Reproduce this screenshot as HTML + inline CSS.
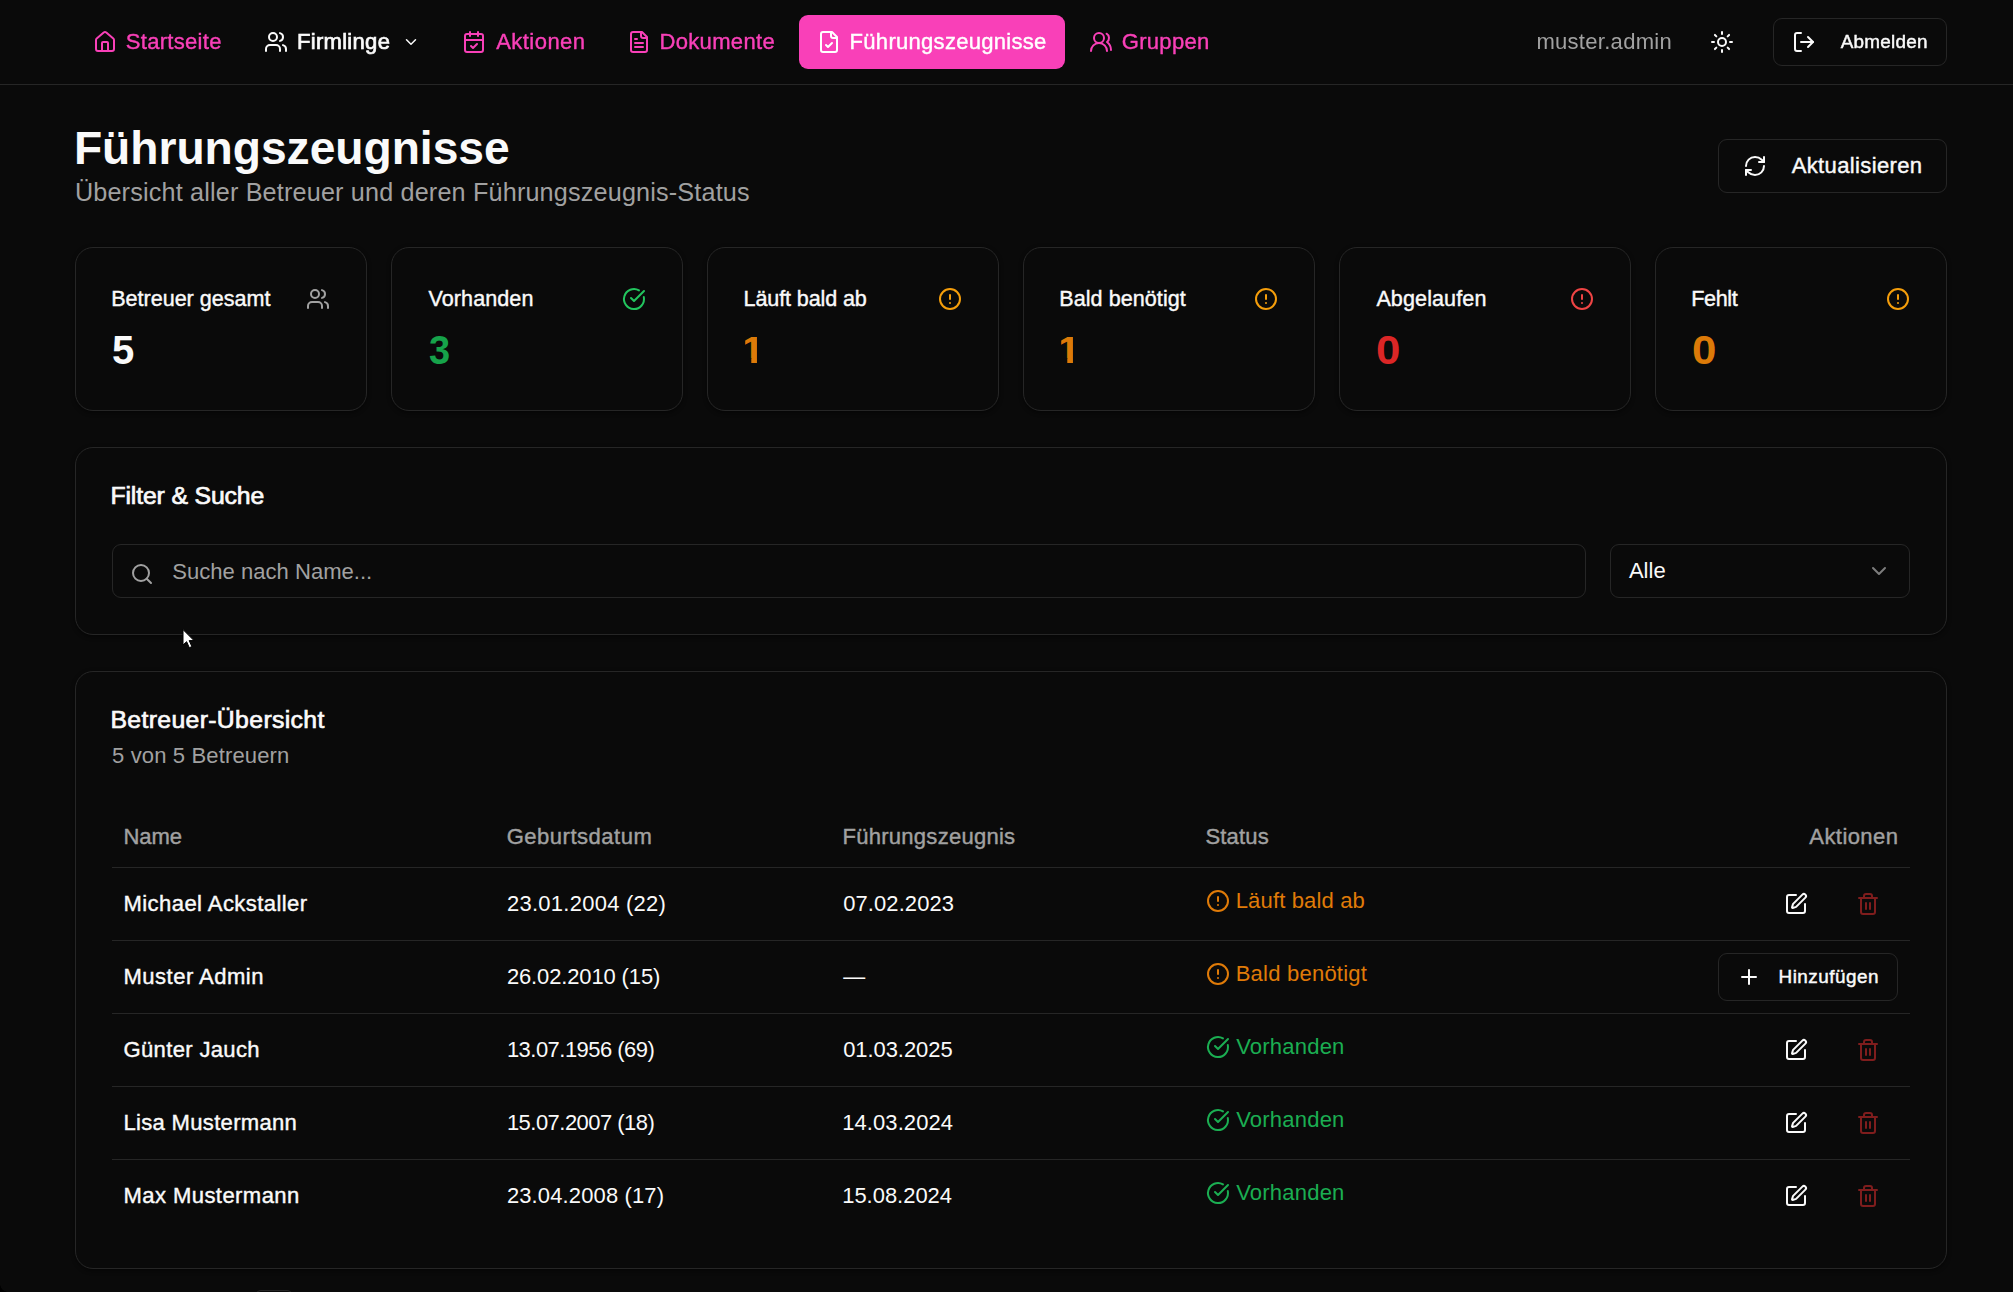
<!DOCTYPE html>
<html lang="de"><head><meta charset="utf-8"><title>Führungszeugnisse</title><style>html,body{margin:0;padding:0;background:#0a0a0a;}
body{width:2013px;height:1292px;position:relative;overflow:hidden;font-family:"Liberation Sans",sans-serif;color:#fafafa;}
.t{position:absolute;white-space:nowrap;display:block;}
.b{position:absolute;box-sizing:border-box;}
.i{position:absolute;display:block;overflow:visible;}
header{position:absolute;left:0;top:0;width:2013px;height:85px;will-change:transform;}</style></head><body>
<header>
<div class="b" style="left:0;top:84px;width:2013px;height:1px;background:#262626"></div>
<svg class="i" style="left:93px;top:30px" width="24" height="24" viewBox="0 0 24 24" fill="none" stroke="#f940b8" stroke-width="2" stroke-linecap="round" stroke-linejoin="round"><path d="M15 21v-8a1 1 0 0 0-1-1h-4a1 1 0 0 0-1 1v8"/><path d="M3 10a2 2 0 0 1 .709-1.528l7-5.999a2 2 0 0 1 2.582 0l7 5.999A2 2 0 0 1 21 10v9a2 2 0 0 1-2 2H5a2 2 0 0 1-2-2z"/></svg>
<span class="t" style="left:125.80px;top:25.00px;font-size:22.05px;line-height:33px;color:#f940b8;letter-spacing:0.281px;-webkit-text-stroke:0.4px #f940b8;">Startseite</span>
<svg class="i" style="left:264px;top:30px" width="24" height="24" viewBox="0 0 24 24" fill="none" stroke="#fafafa" stroke-width="2" stroke-linecap="round" stroke-linejoin="round"><path d="M16 21v-2a4 4 0 0 0-4-4H6a4 4 0 0 0-4 4v2"/><circle cx="9" cy="7" r="4"/><path d="M22 21v-2a4 4 0 0 0-3-3.87"/><path d="M16 3.13a4 4 0 0 1 0 7.75"/></svg>
<span class="t" style="left:296.95px;top:25.00px;font-size:22.05px;line-height:33px;color:#fafafa;letter-spacing:0.289px;-webkit-text-stroke:0.7px #fafafa;">Firmlinge</span>
<svg class="i" style="left:402px;top:33px" width="18" height="18" viewBox="0 0 24 24" fill="none" stroke="#fafafa" stroke-width="2" stroke-linecap="round" stroke-linejoin="round"><path d="m6 9 6 6 6-6"/></svg>
<svg class="i" style="left:462px;top:30px" width="24" height="24" viewBox="0 0 24 24" fill="none" stroke="#f940b8" stroke-width="2" stroke-linecap="round" stroke-linejoin="round"><path d="M8 2v4"/><path d="M16 2v4"/><rect width="18" height="18" x="3" y="4" rx="2"/><path d="M3 10h18"/><path d="m9 16 2 2 4-4"/></svg>
<span class="t" style="left:496.20px;top:25.00px;font-size:22.05px;line-height:33px;color:#f940b8;letter-spacing:0.438px;-webkit-text-stroke:0.4px #f940b8;">Aktionen</span>
<svg class="i" style="left:627px;top:30px" width="24" height="24" viewBox="0 0 24 24" fill="none" stroke="#f940b8" stroke-width="2" stroke-linecap="round" stroke-linejoin="round"><path d="M15 2H6a2 2 0 0 0-2 2v16a2 2 0 0 0 2 2h12a2 2 0 0 0 2-2V7Z"/><path d="M14 2v4a2 2 0 0 0 2 2h4"/><path d="M10 9H8"/><path d="M16 13H8"/><path d="M16 17H8"/></svg>
<span class="t" style="left:659.50px;top:25.00px;font-size:22.05px;line-height:33px;color:#f940b8;letter-spacing:0.302px;-webkit-text-stroke:0.4px #f940b8;">Dokumente</span>
<div class="b" style="left:799px;top:15px;width:266px;height:54px;border-radius:9px;background:#f940b8;"></div>
<svg class="i" style="left:817px;top:30px" width="24" height="24" viewBox="0 0 24 24" fill="none" stroke="#ffffff" stroke-width="2" stroke-linecap="round" stroke-linejoin="round"><path d="M15 2H6a2 2 0 0 0-2 2v16a2 2 0 0 0 2 2h12a2 2 0 0 0 2-2V7Z"/><path d="M14 2v4a2 2 0 0 0 2 2h4"/><path d="m9 15 2 2 4-4"/></svg>
<span class="t" style="left:849.60px;top:25.00px;font-size:22.05px;line-height:33px;color:#ffffff;letter-spacing:0.272px;-webkit-text-stroke:0.4px #ffffff;">Führungszeugnisse</span>
<svg class="i" style="left:1089px;top:30px" width="24" height="24" viewBox="0 0 24 24" fill="none" stroke="#f940b8" stroke-width="2" stroke-linecap="round" stroke-linejoin="round"><path d="M18 21a8 8 0 0 0-16 0"/><circle cx="10" cy="8" r="5"/><path d="M22 20c0-3.37-2-6.5-4-8a5 5 0 0 0-.45-8.3"/></svg>
<span class="t" style="left:1121.70px;top:25.00px;font-size:22.05px;line-height:33px;color:#f940b8;letter-spacing:0.294px;-webkit-text-stroke:0.4px #f940b8;">Gruppen</span>
<span class="t" style="left:1536.40px;top:25.00px;font-size:22.05px;line-height:33px;color:#a1a1a1;letter-spacing:0.275px;">muster.admin</span>
<svg class="i" style="left:1710px;top:30px" width="24" height="24" viewBox="0 0 24 24" fill="none" stroke="#fafafa" stroke-width="2" stroke-linecap="round" stroke-linejoin="round"><circle cx="12" cy="12" r="4"/><path d="M12 2v2"/><path d="M12 20v2"/><path d="m4.93 4.93 1.41 1.41"/><path d="m17.66 17.66 1.41 1.41"/><path d="M2 12h2"/><path d="M20 12h2"/><path d="m6.34 17.66-1.41 1.41"/><path d="m19.07 4.93-1.41 1.41"/></svg>
<div class="b" style="left:1773px;top:18px;width:174px;height:48px;border-radius:9px;border:1px solid #262626;"></div>
<svg class="i" style="left:1792px;top:30px" width="24" height="24" viewBox="0 0 24 24" fill="none" stroke="#fafafa" stroke-width="2" stroke-linecap="round" stroke-linejoin="round"><path d="M9 21H5a2 2 0 0 1-2-2V5a2 2 0 0 1 2-2h4"/><polyline points="16 17 21 12 16 7"/><line x1="21" x2="9" y1="12" y2="12"/></svg>
<span class="t" style="left:1840.72px;top:28.01px;font-size:18.9px;line-height:28px;color:#fafafa;letter-spacing:0.256px;-webkit-text-stroke:0.45px #fafafa;">Abmelden</span>
</header>
<main>
<span class="t" style="left:73.90px;top:114.00px;font-size:46.19px;line-height:69px;color:#fafafa;font-weight:700;letter-spacing:-0.029px;">Führungszeugnisse</span>
<span class="t" style="left:74.90px;top:173.00px;font-size:25.2px;line-height:38px;color:#a1a1a1;letter-spacing:0.173px;">Übersicht aller Betreuer und deren Führungszeugnis-Status</span>
<div class="b" style="left:1718px;top:139px;width:229px;height:54px;border-radius:9px;border:1px solid #262626;"></div>
<svg class="i" style="left:1743px;top:154px" width="24" height="24" viewBox="0 0 24 24" fill="none" stroke="#fafafa" stroke-width="2" stroke-linecap="round" stroke-linejoin="round"><path d="M3 12a9 9 0 0 1 9-9 9.75 9.75 0 0 1 6.74 2.74L21 8"/><path d="M21 3v5h-5"/><path d="M21 12a9 9 0 0 1-9 9 9.75 9.75 0 0 1-6.74-2.74L3 16"/><path d="M8 16H3v5"/></svg>
<span class="t" style="left:1791.70px;top:149.00px;font-size:22.05px;line-height:33px;color:#fafafa;letter-spacing:0.345px;-webkit-text-stroke:0.4px #fafafa;">Aktualisieren</span>
<div class="b" style="left:75px;top:247px;width:292px;height:164px;border-radius:18px;border:1px solid #262626;box-shadow:0 1.5px 4px rgba(0,0,0,.45);"></div>
<span class="t" style="left:111.20px;top:283.01px;font-size:21.57px;line-height:32px;color:#fafafa;letter-spacing:-0.015px;-webkit-text-stroke:0.4px #fafafa;">Betreuer gesamt</span>
<svg class="i" style="left:306px;top:287px" width="24" height="24" viewBox="0 0 24 24" fill="none" stroke="#a1a1a1" stroke-width="2" stroke-linecap="round" stroke-linejoin="round"><path d="M16 21v-2a4 4 0 0 0-4-4H6a4 4 0 0 0-4 4v2"/><circle cx="9" cy="7" r="4"/><path d="M22 21v-2a4 4 0 0 0-3-3.87"/><path d="M16 3.13a4 4 0 0 1 0 7.75"/></svg>
<span class="t" style="left:111.70px;top:320.61px;font-size:39.5px;line-height:59px;color:#fafafa;font-weight:700;transform:scale(1.015,1.035);transform-origin:1.00px 43.19px;">5</span>
<div class="b" style="left:391px;top:247px;width:292px;height:164px;border-radius:18px;border:1px solid #262626;box-shadow:0 1.5px 4px rgba(0,0,0,.45);"></div>
<span class="t" style="left:428.50px;top:283.01px;font-size:21.57px;line-height:32px;color:#fafafa;letter-spacing:0.072px;-webkit-text-stroke:0.4px #fafafa;">Vorhanden</span>
<svg class="i" style="left:622px;top:287px" width="24" height="24" viewBox="0 0 24 24" fill="none" stroke="#22c55e" stroke-width="2" stroke-linecap="round" stroke-linejoin="round"><path d="M21.801 10A10 10 0 1 1 17 3.335"/><path d="m9 11 3 3L22 4"/></svg>
<span class="t" style="left:429.00px;top:320.61px;font-size:39.5px;line-height:59px;color:#16a34a;font-weight:700;transform:scale(0.962,1.035);transform-origin:0.00px 43.19px;">3</span>
<div class="b" style="left:707px;top:247px;width:292px;height:164px;border-radius:18px;border:1px solid #262626;box-shadow:0 1.5px 4px rgba(0,0,0,.45);"></div>
<span class="t" style="left:743.50px;top:283.01px;font-size:21.57px;line-height:32px;color:#fafafa;letter-spacing:-0.116px;-webkit-text-stroke:0.4px #fafafa;">Läuft bald ab</span>
<svg class="i" style="left:938px;top:287px" width="24" height="24" viewBox="0 0 24 24" fill="none" stroke="#f59e0b" stroke-width="2" stroke-linecap="round" stroke-linejoin="round"><circle cx="12" cy="12" r="10"/><line x1="12" x2="12" y1="8" y2="12"/><line x1="12" x2="12.01" y1="16" y2="16"/></svg>
<span class="t" style="left:740.82px;top:318.00px;font-size:44px;line-height:60px;color:#dc7a08;font-weight:700;clip-path:polygon(4.4px 0,16.15px 0,16.15px 100%,10.47px 100%,10.47px 39.09px,4.4px 39.09px);transform:scaleY(0.851);transform-origin:0 45.25px;">1</span>
<div class="b" style="left:1023px;top:247px;width:292px;height:164px;border-radius:18px;border:1px solid #262626;box-shadow:0 1.5px 4px rgba(0,0,0,.45);"></div>
<span class="t" style="left:1059.20px;top:283.01px;font-size:21.57px;line-height:32px;color:#fafafa;letter-spacing:0.059px;-webkit-text-stroke:0.4px #fafafa;">Bald benötigt</span>
<svg class="i" style="left:1254px;top:287px" width="24" height="24" viewBox="0 0 24 24" fill="none" stroke="#f59e0b" stroke-width="2" stroke-linecap="round" stroke-linejoin="round"><circle cx="12" cy="12" r="10"/><line x1="12" x2="12" y1="8" y2="12"/><line x1="12" x2="12.01" y1="16" y2="16"/></svg>
<span class="t" style="left:1056.82px;top:318.00px;font-size:44px;line-height:60px;color:#dc7a08;font-weight:700;clip-path:polygon(4.4px 0,16.15px 0,16.15px 100%,10.47px 100%,10.47px 39.09px,4.4px 39.09px);transform:scaleY(0.851);transform-origin:0 45.25px;">1</span>
<div class="b" style="left:1339px;top:247px;width:292px;height:164px;border-radius:18px;border:1px solid #262626;box-shadow:0 1.5px 4px rgba(0,0,0,.45);"></div>
<span class="t" style="left:1376.40px;top:283.01px;font-size:21.57px;line-height:32px;color:#fafafa;letter-spacing:0.098px;-webkit-text-stroke:0.4px #fafafa;">Abgelaufen</span>
<svg class="i" style="left:1570px;top:287px" width="24" height="24" viewBox="0 0 24 24" fill="none" stroke="#ef4444" stroke-width="2" stroke-linecap="round" stroke-linejoin="round"><circle cx="12" cy="12" r="10"/><line x1="12" x2="12" y1="8" y2="12"/><line x1="12" x2="12.01" y1="16" y2="16"/></svg>
<span class="t" style="left:1375.90px;top:320.61px;font-size:39.5px;line-height:59px;color:#dc2626;font-weight:700;transform:scale(1.110,1.035);transform-origin:1.00px 43.19px;">0</span>
<div class="b" style="left:1655px;top:247px;width:292px;height:164px;border-radius:18px;border:1px solid #262626;box-shadow:0 1.5px 4px rgba(0,0,0,.45);"></div>
<span class="t" style="left:1691.20px;top:283.01px;font-size:21.57px;line-height:32px;color:#fafafa;letter-spacing:-0.336px;-webkit-text-stroke:0.4px #fafafa;">Fehlt</span>
<svg class="i" style="left:1886px;top:287px" width="24" height="24" viewBox="0 0 24 24" fill="none" stroke="#f59e0b" stroke-width="2" stroke-linecap="round" stroke-linejoin="round"><circle cx="12" cy="12" r="10"/><line x1="12" x2="12" y1="8" y2="12"/><line x1="12" x2="12.01" y1="16" y2="16"/></svg>
<span class="t" style="left:1691.90px;top:320.61px;font-size:39.5px;line-height:59px;color:#dc7a08;font-weight:700;transform:scale(1.110,1.035);transform-origin:1.00px 43.19px;">0</span>
<div class="b" style="left:75px;top:447px;width:1872px;height:188px;border-radius:18px;border:1px solid #262626;box-shadow:0 1.5px 4px rgba(0,0,0,.45);"></div>
<span class="t" style="left:110.45px;top:477.00px;font-size:24.8px;line-height:37px;color:#fafafa;letter-spacing:-0.149px;-webkit-text-stroke:0.7px #fafafa;">Filter & Suche</span>
<div class="b" style="left:112px;top:544px;width:1474px;height:54px;border-radius:9px;border:1px solid #262626;"></div>
<svg class="i" style="left:130px;top:562px" width="24" height="24" viewBox="0 0 24 24" fill="none" stroke="#a1a1a1" stroke-width="2" stroke-linecap="round" stroke-linejoin="round"><circle cx="11" cy="11" r="8"/><path d="m21 21-4.3-4.3"/></svg>
<span class="t" style="left:172.30px;top:555.00px;font-size:22.05px;line-height:33px;color:#a1a1a1;letter-spacing:0.010px;">Suche nach Name...</span>
<div class="b" style="left:1610px;top:544px;width:300px;height:54px;border-radius:9px;border:1px solid #262626;"></div>
<span class="t" style="left:1628.90px;top:554.00px;font-size:22.05px;line-height:33px;color:#fafafa;">Alle</span>
<svg class="i" style="left:1867px;top:559px" width="24" height="24" viewBox="0 0 24 24" fill="none" stroke="#7d7d7d" stroke-width="2" stroke-linecap="round" stroke-linejoin="round"><path d="m6 9 6 6 6-6"/></svg>
<div class="b" style="left:75px;top:671px;width:1872px;height:598px;border-radius:18px;border:1px solid #262626;box-shadow:0 1.5px 4px rgba(0,0,0,.45);"></div>
<span class="t" style="left:110.45px;top:701.00px;font-size:24.8px;line-height:37px;color:#fafafa;letter-spacing:0.341px;-webkit-text-stroke:0.7px #fafafa;">Betreuer-Übersicht</span>
<span class="t" style="left:112.00px;top:739.00px;font-size:22.05px;line-height:33px;color:#a1a1a1;letter-spacing:0.125px;">5 von 5 Betreuern</span>
<span class="t" style="left:123.50px;top:820.00px;font-size:22.05px;line-height:33px;color:#a1a1a1;letter-spacing:-0.116px;-webkit-text-stroke:0.4px #a1a1a1;">Name</span>
<span class="t" style="left:506.70px;top:820.00px;font-size:22.05px;line-height:33px;color:#a1a1a1;letter-spacing:0.488px;-webkit-text-stroke:0.4px #a1a1a1;">Geburtsdatum</span>
<span class="t" style="left:842.50px;top:820.00px;font-size:22.05px;line-height:33px;color:#a1a1a1;letter-spacing:0.250px;-webkit-text-stroke:0.4px #a1a1a1;">Führungszeugnis</span>
<span class="t" style="left:1205.50px;top:820.00px;font-size:22.05px;line-height:33px;color:#a1a1a1;letter-spacing:0.144px;-webkit-text-stroke:0.4px #a1a1a1;">Status</span>
<span class="t" style="left:1809.30px;top:820.00px;font-size:22.05px;line-height:33px;color:#a1a1a1;letter-spacing:0.409px;-webkit-text-stroke:0.4px #a1a1a1;">Aktionen</span>
<div class="b" style="left:112px;top:867px;width:1798px;height:1px;background:#262626"></div>
<div class="b" style="left:112px;top:940px;width:1798px;height:1px;background:#262626"></div>
<div class="b" style="left:112px;top:1013px;width:1798px;height:1px;background:#262626"></div>
<div class="b" style="left:112px;top:1086px;width:1798px;height:1px;background:#262626"></div>
<div class="b" style="left:112px;top:1159px;width:1798px;height:1px;background:#262626"></div>
<span class="t" style="left:123.50px;top:887.00px;font-size:22.05px;line-height:33px;color:#fafafa;letter-spacing:0.423px;-webkit-text-stroke:0.4px #fafafa;">Michael Ackstaller</span>
<span class="t" style="left:506.90px;top:887.02px;font-size:21.96px;line-height:33px;color:#fafafa;letter-spacing:0.286px;">23.01.2004 (22)</span>
<span class="t" style="left:843.20px;top:887.02px;font-size:21.96px;line-height:33px;color:#fafafa;letter-spacing:0.104px;">07.02.2023</span>
<span class="t" style="left:1235.70px;top:884.00px;font-size:22.05px;line-height:33px;color:#e07b08;letter-spacing:0.139px;">Läuft bald ab</span>
<svg class="i" style="left:1206px;top:889px" width="24" height="24" viewBox="0 0 24 24" fill="none" stroke="#e07b08" stroke-width="2" stroke-linecap="round" stroke-linejoin="round"><circle cx="12" cy="12" r="10"/><line x1="12" x2="12" y1="8" y2="12"/><line x1="12" x2="12.01" y1="16" y2="16"/></svg>
<svg class="i" style="left:1784px;top:892px" width="24" height="24" viewBox="0 0 24 24" fill="none" stroke="#fafafa" stroke-width="2" stroke-linecap="round" stroke-linejoin="round"><path d="M12 3H5a2 2 0 0 0-2 2v14a2 2 0 0 0 2 2h14a2 2 0 0 0 2-2v-7"/><path d="M18.375 2.625a1 1 0 0 1 3 3l-9.013 9.014a2 2 0 0 1-.853.505l-2.873.84a.5.5 0 0 1-.62-.62l.84-2.873a2 2 0 0 1 .506-.852z"/></svg>
<svg class="i" style="left:1856px;top:892px" width="24" height="24" viewBox="0 0 24 24" fill="none" stroke="#7f1d1d" stroke-width="2" stroke-linecap="round" stroke-linejoin="round"><path d="M3 6h18"/><path d="M19 6v14c0 1-1 2-2 2H7c-1 0-2-1-2-2V6"/><path d="M8 6V4c0-1 1-2 2-2h4c1 0 2 1 2 2v2"/><line x1="10" x2="10" y1="11" y2="17"/><line x1="14" x2="14" y1="11" y2="17"/></svg>
<span class="t" style="left:123.50px;top:960.00px;font-size:22.05px;line-height:33px;color:#fafafa;letter-spacing:0.470px;-webkit-text-stroke:0.4px #fafafa;">Muster Admin</span>
<span class="t" style="left:506.90px;top:960.02px;font-size:21.96px;line-height:33px;color:#fafafa;letter-spacing:-0.114px;">26.02.2010 (15)</span>
<span class="t" style="left:843.20px;top:960.02px;font-size:21.96px;line-height:33px;color:#fafafa;">—</span>
<span class="t" style="left:1235.70px;top:957.00px;font-size:22.05px;line-height:33px;color:#e07b08;letter-spacing:0.210px;">Bald benötigt</span>
<svg class="i" style="left:1206px;top:962px" width="24" height="24" viewBox="0 0 24 24" fill="none" stroke="#e07b08" stroke-width="2" stroke-linecap="round" stroke-linejoin="round"><circle cx="12" cy="12" r="10"/><line x1="12" x2="12" y1="8" y2="12"/><line x1="12" x2="12.01" y1="16" y2="16"/></svg>
<div class="b" style="left:1718px;top:953px;width:180px;height:48px;border-radius:9px;border:1px solid #262626;"></div>
<svg class="i" style="left:1737px;top:965px" width="24" height="24" viewBox="0 0 24 24" fill="none" stroke="#fafafa" stroke-width="2" stroke-linecap="round" stroke-linejoin="round"><path d="M5 12h14"/><path d="M12 5v14"/></svg>
<span class="t" style="left:1778.52px;top:963.01px;font-size:18.9px;line-height:28px;color:#fafafa;letter-spacing:0.499px;-webkit-text-stroke:0.45px #fafafa;">Hinzufügen</span>
<span class="t" style="left:123.50px;top:1033.00px;font-size:22.05px;line-height:33px;color:#fafafa;letter-spacing:0.337px;-webkit-text-stroke:0.4px #fafafa;">Günter Jauch</span>
<span class="t" style="left:506.90px;top:1033.02px;font-size:21.96px;line-height:33px;color:#fafafa;letter-spacing:-0.507px;">13.07.1956 (69)</span>
<span class="t" style="left:843.20px;top:1033.02px;font-size:21.96px;line-height:33px;color:#fafafa;letter-spacing:-0.052px;">01.03.2025</span>
<span class="t" style="left:1236.20px;top:1030.00px;font-size:22.05px;line-height:33px;color:#1bae52;letter-spacing:0.188px;">Vorhanden</span>
<svg class="i" style="left:1206px;top:1035px" width="24" height="24" viewBox="0 0 24 24" fill="none" stroke="#1bae52" stroke-width="2" stroke-linecap="round" stroke-linejoin="round"><path d="M21.801 10A10 10 0 1 1 17 3.335"/><path d="m9 11 3 3L22 4"/></svg>
<svg class="i" style="left:1784px;top:1038px" width="24" height="24" viewBox="0 0 24 24" fill="none" stroke="#fafafa" stroke-width="2" stroke-linecap="round" stroke-linejoin="round"><path d="M12 3H5a2 2 0 0 0-2 2v14a2 2 0 0 0 2 2h14a2 2 0 0 0 2-2v-7"/><path d="M18.375 2.625a1 1 0 0 1 3 3l-9.013 9.014a2 2 0 0 1-.853.505l-2.873.84a.5.5 0 0 1-.62-.62l.84-2.873a2 2 0 0 1 .506-.852z"/></svg>
<svg class="i" style="left:1856px;top:1038px" width="24" height="24" viewBox="0 0 24 24" fill="none" stroke="#7f1d1d" stroke-width="2" stroke-linecap="round" stroke-linejoin="round"><path d="M3 6h18"/><path d="M19 6v14c0 1-1 2-2 2H7c-1 0-2-1-2-2V6"/><path d="M8 6V4c0-1 1-2 2-2h4c1 0 2 1 2 2v2"/><line x1="10" x2="10" y1="11" y2="17"/><line x1="14" x2="14" y1="11" y2="17"/></svg>
<span class="t" style="left:123.50px;top:1106.00px;font-size:22.05px;line-height:33px;color:#fafafa;letter-spacing:0.305px;-webkit-text-stroke:0.4px #fafafa;">Lisa Mustermann</span>
<span class="t" style="left:506.90px;top:1106.02px;font-size:21.96px;line-height:33px;color:#fafafa;letter-spacing:-0.507px;">15.07.2007 (18)</span>
<span class="t" style="left:842.20px;top:1106.02px;font-size:21.96px;line-height:33px;color:#fafafa;letter-spacing:0.104px;">14.03.2024</span>
<span class="t" style="left:1236.20px;top:1103.00px;font-size:22.05px;line-height:33px;color:#1bae52;letter-spacing:0.188px;">Vorhanden</span>
<svg class="i" style="left:1206px;top:1108px" width="24" height="24" viewBox="0 0 24 24" fill="none" stroke="#1bae52" stroke-width="2" stroke-linecap="round" stroke-linejoin="round"><path d="M21.801 10A10 10 0 1 1 17 3.335"/><path d="m9 11 3 3L22 4"/></svg>
<svg class="i" style="left:1784px;top:1111px" width="24" height="24" viewBox="0 0 24 24" fill="none" stroke="#fafafa" stroke-width="2" stroke-linecap="round" stroke-linejoin="round"><path d="M12 3H5a2 2 0 0 0-2 2v14a2 2 0 0 0 2 2h14a2 2 0 0 0 2-2v-7"/><path d="M18.375 2.625a1 1 0 0 1 3 3l-9.013 9.014a2 2 0 0 1-.853.505l-2.873.84a.5.5 0 0 1-.62-.62l.84-2.873a2 2 0 0 1 .506-.852z"/></svg>
<svg class="i" style="left:1856px;top:1111px" width="24" height="24" viewBox="0 0 24 24" fill="none" stroke="#7f1d1d" stroke-width="2" stroke-linecap="round" stroke-linejoin="round"><path d="M3 6h18"/><path d="M19 6v14c0 1-1 2-2 2H7c-1 0-2-1-2-2V6"/><path d="M8 6V4c0-1 1-2 2-2h4c1 0 2 1 2 2v2"/><line x1="10" x2="10" y1="11" y2="17"/><line x1="14" x2="14" y1="11" y2="17"/></svg>
<span class="t" style="left:123.50px;top:1179.00px;font-size:22.05px;line-height:33px;color:#fafafa;letter-spacing:0.420px;-webkit-text-stroke:0.4px #fafafa;">Max Mustermann</span>
<span class="t" style="left:506.90px;top:1179.02px;font-size:21.96px;line-height:33px;color:#fafafa;letter-spacing:0.150px;">23.04.2008 (17)</span>
<span class="t" style="left:842.20px;top:1179.02px;font-size:21.96px;line-height:33px;color:#fafafa;letter-spacing:-0.007px;">15.08.2024</span>
<span class="t" style="left:1236.20px;top:1176.00px;font-size:22.05px;line-height:33px;color:#1bae52;letter-spacing:0.188px;">Vorhanden</span>
<svg class="i" style="left:1206px;top:1181px" width="24" height="24" viewBox="0 0 24 24" fill="none" stroke="#1bae52" stroke-width="2" stroke-linecap="round" stroke-linejoin="round"><path d="M21.801 10A10 10 0 1 1 17 3.335"/><path d="m9 11 3 3L22 4"/></svg>
<svg class="i" style="left:1784px;top:1184px" width="24" height="24" viewBox="0 0 24 24" fill="none" stroke="#fafafa" stroke-width="2" stroke-linecap="round" stroke-linejoin="round"><path d="M12 3H5a2 2 0 0 0-2 2v14a2 2 0 0 0 2 2h14a2 2 0 0 0 2-2v-7"/><path d="M18.375 2.625a1 1 0 0 1 3 3l-9.013 9.014a2 2 0 0 1-.853.505l-2.873.84a.5.5 0 0 1-.62-.62l.84-2.873a2 2 0 0 1 .506-.852z"/></svg>
<svg class="i" style="left:1856px;top:1184px" width="24" height="24" viewBox="0 0 24 24" fill="none" stroke="#7f1d1d" stroke-width="2" stroke-linecap="round" stroke-linejoin="round"><path d="M3 6h18"/><path d="M19 6v14c0 1-1 2-2 2H7c-1 0-2-1-2-2V6"/><path d="M8 6V4c0-1 1-2 2-2h4c1 0 2 1 2 2v2"/><line x1="10" x2="10" y1="11" y2="17"/><line x1="14" x2="14" y1="11" y2="17"/></svg>
<svg class="i" style="left:182px;top:629px" width="14" height="21" viewBox="0 0 14 21"><path d="M1 .6v15.4l3.6-3.3 2.7 6 2.6-1.1-2.7-6H12z" fill="#fff" stroke="#000" stroke-width="1" stroke-linejoin="round"/></svg>
<div class="b" style="left:255px;top:1290px;width:38px;height:14px;border-radius:6px;border:1px solid #262626;"></div>
<div class="b" style="left:0;top:1284px;width:8px;height:8px;background:radial-gradient(circle at 100% 0,rgba(0,0,0,0) 7.5px,#000 8px)"></div>
</main>
</body></html>
